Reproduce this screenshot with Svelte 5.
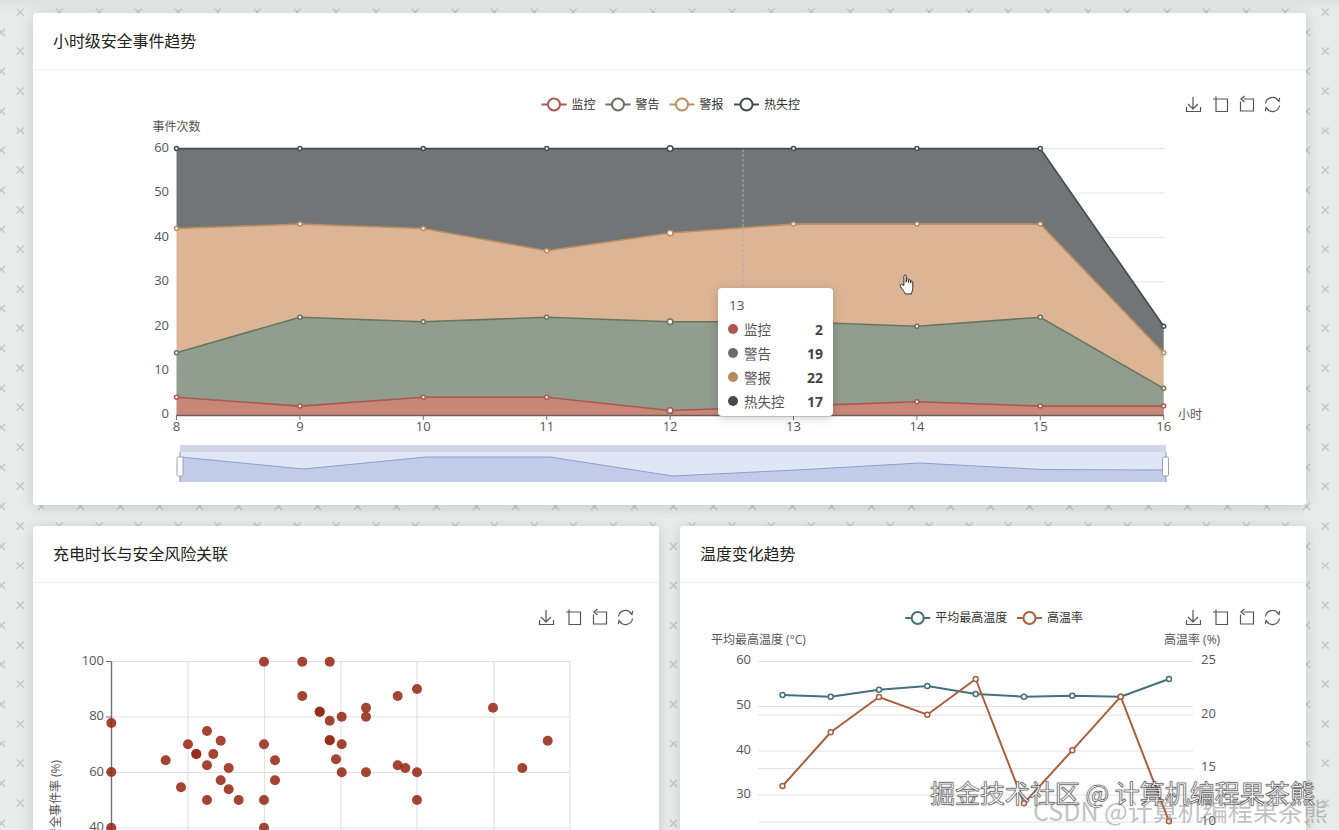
<script>
    const hx = (i) => 176.5 + i * 123.4;
    const hy = (v) => 415 - v * 4.44;

    const stacks = [
        { name: "监控", line: "#a9574f", fill: "#c6806f", pt: "#a9574f", top: [4, 2, 4, 4, 1, 2, 3, 2, 2] },
        { name: "警告", line: "#67755f", fill: "#8a9786", pt: "#67755f", top: [14, 22, 21, 22, 21, 21, 20, 22, 6] },
        { name: "警报", line: "#b98f63", fill: "#dab08f", pt: "#b98f63", top: [42, 43, 42, 37, 41, 43, 43, 43, 14] },
        { name: "热失控", line: "#47494b", fill: "#696b6d", pt: "#47494b", top: [60, 60, 60, 60, 60, 60, 60, 60, 20] }
    ];

    const toLine = (vals) => vals.map((v, i) => `${hx(i)},${hy(v)}`).join(" ");
    const toArea = (vals, below) => {
        const back = below ? [...below].reverse().map((v, i) => `${hx(below.length - 1 - i)},${hy(v)}`) : [`${hx(8)},415`, `${hx(0)},415`];
        return toLine(vals) + " " + back.join(" ");
    };

    const legend1 = [
        { x: 554, name: "监控", color: "#a9574f" },
        { x: 618, name: "警告", color: "#6b6e66" },
        { x: 682, name: "警报", color: "#b98f63" },
        { x: 746.5, name: "热失控", color: "#47494b" }
    ];

    const tooltipRows = [
        { name: "监控", value: 2, color: "#a9574f" },
        { name: "警告", value: 19, color: "#6b6e66" },
        { name: "警报", value: 22, color: "#b48a5e" },
        { name: "热失控", value: 17, color: "#47494b" }
    ];

    const zoomPts = [457, 469, 457, 457, 476, 470, 463, 469.5, 470].map((y, i) => `${180 + i * 123.25},${y}`).join(" ");

    const scatter = [
        [111.3, 723], [111.3, 772], [111.3, 827.7], [165.7, 760.3], [181, 787.3], [188, 744.3],
        [196.3, 754], [196.3, 754], [207, 731], [207, 765.3], [207, 800], [213.3, 754], [220.7, 740.7],
        [220.7, 780.3], [228.7, 768], [228.7, 789.3], [238.7, 800], [264, 661.7], [264, 744.3], [264, 800],
        [264, 827.7], [275, 760.3], [275, 780.3], [302.3, 661.7], [302.3, 696], [319.7, 711.7], [319.7, 711.7],
        [329.7, 661.7], [329.7, 720.7], [329.7, 740.3], [329.7, 740.3], [336, 759.3], [341.7, 716.7],
        [341.7, 744.3], [341.7, 772.3], [366, 707.7], [366, 716.7], [366, 772.3], [397.7, 696], [417, 689],
        [397.7, 765.3], [405.3, 768], [417, 772.3], [417, 800], [493, 707.7], [522.3, 768], [547.7, 740.7]
    ];

    const tempX = [782.5, 830.7, 879, 927.3, 975.7, 1024, 1072.3, 1120.7, 1169];
    const temp = [695, 696.7, 689.7, 686, 694, 696.7, 695.7, 696.7, 679];
    const rate = [786, 732.3, 697, 714.7, 679, 803.3, 750.3, 696.7, 821.3];
    const pts = (ys) => ys.map((y, i) => `${tempX[i]},${y}`).join(" ");
</script>

{#snippet toolbox(x, y)}
    <g class="tool" transform="translate({x} {y})">
        <path d="M-1 -7.5V4.5M-6 -0.5L-1 4.5L4 -0.5M-7.5 2.5V7H6.5V2.5" />
        <path transform="translate(27 0)" d="M-8 -5.5H6.5V7H-5V-8" />
        <path transform="translate(53 0)" d="M-3.5 -5.5H6.5V6.5H-6.5V-3M-2.5 -8.5L-6 -5.5L-2.5 -2.5" />
        <path transform="translate(78.5 0)" d="M-7 -1A7 7 0 0 1 6 -3.5M3.8 -6L6.4 -3L7.2 -6.6M7 1A7 7 0 0 1 -6 3.5M-3.8 6L-6.4 3L-7.2 6.6" />
    </g>
{/snippet}

{#snippet legendItem(x, y, name, color)}
    <line x1={x - 12.5} x2={x + 12.5} y1={y} y2={y} stroke={color} stroke-width="2" />
    <circle cx={x} cy={y} r="6" fill="#fff" stroke={color} stroke-width="2" />
    <text class="legend" x={x + 17.5} y={y + 1}>{name}</text>
{/snippet}

<div class="page">
    <section class="card">
        <h2>小时级安全事件趋势</h2>
        <div class="chart">
            <svg class="hourly" viewBox="33 70 1273 435">
                {#each [60, 50, 40, 30, 20, 10] as v}
                    <line class="grid" x1="176.5" x2="1164" y1={hy(v)} y2={hy(v)} />
                {/each}
                {#each [...stacks].reverse() as s, i}
                    <polygon points={toArea(s.top, stacks[stacks.length - 2 - i]?.top)} fill={s.fill} fill-opacity="0.94" />
                {/each}
                <line class="pointer" x1="743" x2="743" y1="149" y2="288" />
                {#each stacks as s}
                    <polyline points={toLine(s.top)} fill="none" stroke={s.line} stroke-width="1.6" />
                    {#each s.top as v, i}
                        <circle cx={hx(i)} cy={hy(v)} r={i === 4 ? 2.8 : 2} fill="#fff" stroke={s.pt} stroke-width="1.5" />
                    {/each}
                {/each}

                <line x1="176.5" x2="1164" y1="415.5" y2="415.5" stroke="#6a5d5d" stroke-width="1.6" />
                {#each [8, 9, 10, 11, 12, 13, 14, 15, 16] as h, i}
                    <line x1={hx(i)} x2={hx(i)} y1="415" y2="420" stroke="#6e7079" />
                    <text class="tick mid" x={hx(i)} y="428">{h}</text>
                {/each}
                {#each [0, 10, 20, 30, 40, 50, 60] as v}
                    <text class="tick end" x="169" y={hy(v)}>{v}</text>
                {/each}
                <text class="axis" x="152.5" y="128">事件次数</text>
                <text class="axis" x="1178" y="416">小时</text>

                {#each legend1 as l}
                    {@render legendItem(l.x, 104.5, l.name, l.color)}
                {/each}
                {@render toolbox(1194, 104.5)}

                <rect x="180" y="445" width="986" height="37" fill="#c2cbe7" />
                <polygon points="180,445 1166,445 1166,452 180,452" fill="#d2d6e6" />
                <polygon points={`180,452 ${zoomPts} 1166,452`} fill="#dfe6f5" />
                <polyline points={zoomPts} fill="none" stroke="#8f9fd0" />
                <line x1="180" x2="180" y1="452" y2="482" stroke="#8f97ad" />
                <line x1="1166" x2="1166" y1="452" y2="482" stroke="#8f97ad" />
                <rect class="handle" x="177" y="457" width="6" height="19" rx="1.5" />
                <rect class="handle" x="1162.5" y="457" width="6" height="19" rx="1.5" />
            </svg>

            <div class="tooltip">
                <div class="tip-title">13</div>
                {#each tooltipRows as row}
                    <div class="tip-row">
                        <span class="dot" style="background:{row.color}"></span>
                        <span class="tip-name">{row.name}</span>
                        <b>{row.value}</b>
                    </div>
                {/each}
            </div>

            <svg class="cursor" viewBox="0 0 18 24">
                <path d="M5.2 13V3.2C5.2 1.4 7.6 1.4 7.6 3.2V9.5L7.9 6.8C8.1 5.4 10 5.5 10 7V10L10.3 7.8C10.5 6.6 12.3 6.7 12.3 8.1V10.6L12.6 9C12.9 7.9 14.6 8.2 14.6 9.5V15.5C14.6 18.5 13.4 19.6 13.2 22H6.6C6.2 19.8 4.4 18.6 2.6 15.8L1.4 13.6C0.7 12.2 2.5 11.2 3.5 12.2Z" fill="#fff" stroke="#222" stroke-width="1" stroke-linejoin="round" />
            </svg>
        </div>
    </section>

    <div class="row">
        <section class="card">
            <h2>充电时长与安全风险关联</h2>
            <svg class="lower" viewBox="33 583 626 300">
                {#each [188, 264.5, 341, 417, 494, 570] as x}
                    <line class="grid-v" x1={x} x2={x} y1="661.5" y2="883" />
                {/each}
                {#each [661.5, 717, 772.5, 828] as y}
                    <line class="grid-v" x1="111.5" x2="570" y1={y} y2={y} />
                    <line x1="106" x2="111.5" y1={y} y2={y} stroke="#6e7079" />
                {/each}
                <line x1="111.5" x2="111.5" y1="661.5" y2="883" stroke="#6e7079" stroke-width="1.4" />
                {#each [[100, 661.5], [80, 717], [60, 772.5], [40, 827.5]] as [v, y]}
                    <text class="tick end" x="104" {y}>{v}</text>
                {/each}
                <text class="axis end" transform="translate(57 760) rotate(-90)">安全事件率 (%)</text>
                {#each scatter as [cx, cy]}
                    <circle {cx} {cy} r="5" fill="#962a18" fill-opacity="0.88" />
                {/each}
                {@render toolbox(547, 617.5)}
            </svg>
        </section>

        <section class="card">
            <h2>温度变化趋势</h2>
            <svg class="lower" viewBox="680 583 626 300">
                {#each [661.5, 706.5, 715, 751, 768.5, 795, 822] as y}
                    <line class="grid-v" x1="758.5" x2="1193" y1={y} y2={y} />
                {/each}
                {#each [[60, 661], [50, 706], [40, 750.5], [30, 795]] as [v, y]}
                    <text class="tick end" x="751" {y}>{v}</text>
                {/each}
                {#each [[25, 661], [20, 714.5], [15, 768], [10, 821.5]] as [v, y]}
                    <text class="tick" x="1201" {y}>{v}</text>
                {/each}
                <text class="axis" x="711" y="641">平均最高温度 (°C)</text>
                <text class="axis" x="1164" y="641">高温率 (%)</text>
                {@render legendItem(917.7, 618, "平均最高温度", "#44707a")}
                {@render legendItem(1029.5, 618, "高温率", "#a8603f")}
                {@render toolbox(1194, 617.5)}

                <polyline points={pts(temp)} fill="none" stroke="#44707a" stroke-width="2" />
                {#each temp as y, i}
                    <circle cx={tempX[i]} cy={y} r="2.5" fill="#fff" stroke="#44707a" stroke-width="1.5" />
                {/each}
                <polyline points={pts(rate)} fill="none" stroke="#a8603f" stroke-width="2" />
                {#each rate as y, i}
                    <circle cx={tempX[i]} cy={y} r="2.5" fill="#fff" stroke="#a8603f" stroke-width="1.5" />
                {/each}
            </svg>
        </section>
    </div>

    <div class="mark csdn">CSDN @计算机编程果茶熊</div>
    <div class="mark juejin">掘金技术社区 @ 计算机编程果茶熊</div>
</div>

<style>
    :global(body) {
        margin: 0;
        background: #eceeee;
    }

    .page {
        position: relative;
        box-sizing: border-box;
        height: 830px;
        overflow: hidden;
        padding: 13px 33px 0;
        display: flex;
        flex-direction: column;
        gap: 21px;
        font-family: "Open Sans", "Noto Sans CJK SC", sans-serif;
        background-color: #e9ebeb;
        background-image:
            linear-gradient(to bottom, #dfe1e1 0, #dfe1e100 12px),
            url("data:image/svg+xml,%3Csvg xmlns='http://www.w3.org/2000/svg' width='39.55' height='39.55'%3E%3Cg stroke='%23c4c7c7' stroke-width='1.4' fill='none'%3E%3Cpath d='M16.5 8.5l7 7M23.5 8.5l-7 7M-2 28.5l7 7M5 28.5l-7 7M37.5 28.5l7 7M44.5 28.5l-7 7'/%3E%3C/g%3E%3C/svg%3E");
        background-size: 100% 100%, 39.55px 39.55px;
        background-repeat: no-repeat, repeat;
    }

    .card {
        flex: none;
        background: #fff;
        border-radius: 3px;
        box-shadow: 0 2px 14px rgba(0, 0, 0, 0.14);
        overflow: hidden;
    }

    .row {
        display: grid;
        grid-template-columns: 1fr 1fr;
        gap: 21px;
        flex: none;
    }

    h2 {
        margin: 0;
        padding: 18px 20px;
        height: 20px;
        font-size: 16px;
        font-weight: 400;
        line-height: 20px;
        letter-spacing: -0.1px;
        color: #222;
        border-bottom: 1px solid #ebeef0;
    }

    .chart {
        position: relative;
    }

    svg {
        display: block;
    }

    .hourly {
        width: 1273px;
        height: 435px;
    }

    .lower {
        width: 626px;
        height: 300px;
    }

    text {
        font-family: "Open Sans", "Noto Sans CJK SC", sans-serif;
        dominant-baseline: middle;
    }

    .tick {
        font-size: 13px;
        fill: #555;
    }

    .axis {
        font-size: 12px;
        fill: #555;
    }

    .legend {
        font-size: 12px;
        fill: #333;
    }

    .mid {
        text-anchor: middle;
    }

    .end {
        text-anchor: end;
    }

    .grid {
        stroke: #e0e3ea;
    }

    .grid-v {
        stroke: #dfe1e6;
        stroke-width: 1.2;
    }

    .pointer {
        stroke: #a9adb0;
        stroke-dasharray: 3 2;
    }

    .handle {
        fill: #fff;
        stroke: #9aa0ae;
    }

    .tool path {
        fill: none;
        stroke: #555;
        stroke-width: 1.2;
    }

    .tooltip {
        position: absolute;
        left: 685px;
        top: 218px;
        box-sizing: border-box;
        width: 115px;
        height: 128px;
        padding: 5px 10px 0 11px;
        background: #fff;
        border-radius: 4px;
        box-shadow: 0 2px 10px rgba(0, 0, 0, 0.2);
        font-size: 13.5px;
        color: #555;
    }

    .tip-title {
        height: 24px;
        line-height: 24px;
    }

    .tip-row {
        display: flex;
        align-items: center;
        height: 24px;
    }

    .dot {
        width: 10px;
        height: 10px;
        border-radius: 50%;
        margin-right: 6px;
        margin-left: -1px;
    }

    .tip-name {
        flex: 1;
    }

    .tip-row b {
        font-weight: 700;
        font-size: 14px;
        color: #444;
    }

    .cursor {
        position: absolute;
        left: 866px;
        top: 203px;
        width: 17px;
        height: 23px;
    }

    .mark {
        position: absolute;
        white-space: nowrap;
        font-size: 25px;
        line-height: 30px;
        font-family: "Noto Sans CJK SC", sans-serif;
    }

    .csdn {
        left: 1033px;
        top: 795px;
        color: rgba(140, 140, 140, 0.55);
    }

    .juejin {
        left: 930px;
        top: 777px;
        color: #fff;
        -webkit-text-stroke: 0.5px #333;
        text-shadow: 0 0 2px rgba(0, 0, 0, 0.5);
    }
</style>
